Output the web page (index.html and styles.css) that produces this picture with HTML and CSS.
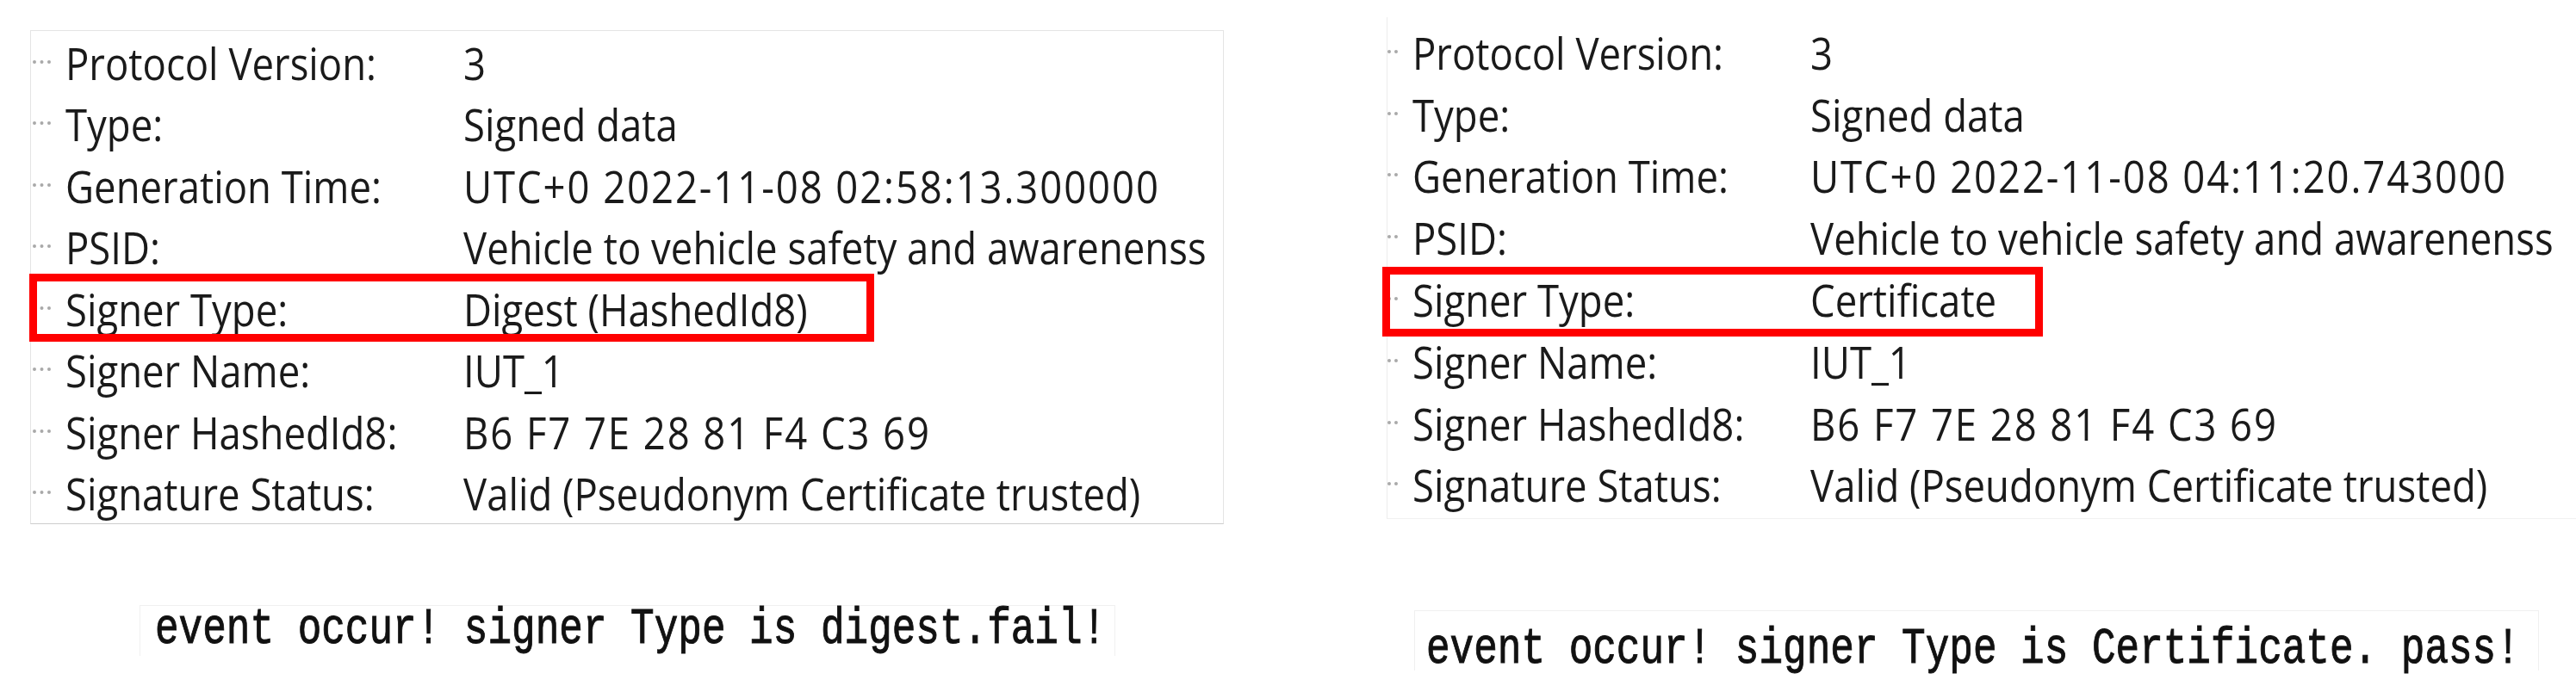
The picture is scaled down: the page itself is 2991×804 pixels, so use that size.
FILE: index.html
```html
<!DOCTYPE html>
<html lang="en">
<head>
  <meta charset="UTF-8">
  <title>Signer Type check</title>
  <link rel="stylesheet" href="styles.css">
</head>
<body>
  <div class="sheet">
    <!-- digest signer: fail -->
    <section class="capture">
      <div class="tree">
        <div class="row"><span class="dots"></span><span class="label">Protocol Version:</span><span class="value">3</span></div>
        <div class="row"><span class="dots"></span><span class="label">Type:</span><span class="value">Signed data</span></div>
        <div class="row"><span class="dots"></span><span class="label">Generation Time:</span><span class="value num">UTC+0 2022-11-08 02:58:13.300000</span></div>
        <div class="row"><span class="dots"></span><span class="label">PSID:</span><span class="value">Vehicle to vehicle safety and awarenenss</span></div>
        <div class="row marked"><span class="dots"></span><span class="label">Signer Type:</span><span class="value">Digest (HashedId8)</span></div>
        <div class="row"><span class="dots"></span><span class="label">Signer Name:</span><span class="value">IUT_1</span></div>
        <div class="row"><span class="dots"></span><span class="label">Signer HashedId8:</span><span class="value num">B6 F7 7E 28 81 F4 C3 69</span></div>
        <div class="row"><span class="dots"></span><span class="label">Signature Status:</span><span class="value">Valid (Pseudonym Certificate trusted)</span></div>
      </div>
      <div class="console"><span class="console-text">event occur! signer Type is digest.fail!</span></div>
    </section>

    <!-- certificate signer: pass -->
    <section class="capture capture-right">
      <div class="tree">
        <div class="row"><span class="dots"></span><span class="label">Protocol Version:</span><span class="value">3</span></div>
        <div class="row"><span class="dots"></span><span class="label">Type:</span><span class="value">Signed data</span></div>
        <div class="row"><span class="dots"></span><span class="label">Generation Time:</span><span class="value num">UTC+0 2022-11-08 04:11:20.743000</span></div>
        <div class="row"><span class="dots"></span><span class="label">PSID:</span><span class="value">Vehicle to vehicle safety and awarenenss</span></div>
        <div class="row marked"><span class="dots"></span><span class="label">Signer Type:</span><span class="value">Certificate</span></div>
        <div class="row"><span class="dots"></span><span class="label">Signer Name:</span><span class="value">IUT_1</span></div>
        <div class="row"><span class="dots"></span><span class="label">Signer HashedId8:</span><span class="value num">B6 F7 7E 28 81 F4 C3 69</span></div>
        <div class="row"><span class="dots"></span><span class="label">Signature Status:</span><span class="value">Valid (Pseudonym Certificate trusted)</span></div>
      </div>
      <div class="console"><span class="console-text">event occur! signer Type is Certificate. pass!</span></div>
    </section>
  </div>
</body>
</html>
```

FILE: styles.css
```css
/* Basic styling */
body {
  margin: 0;
  background-color: #ffffff;
  font-family: 'Open Sans', 'Noto Sans', sans-serif;
  color: #1a1a1a;
}

.sheet {
  display: flex;
  width: 2991px;
  height: 804px;
  overflow: hidden;
}

.capture {
  flex: none;
  width: 1386px;
  margin-left: 35px;
  padding-top: 35px;
}

.capture-right {
  flex: 1;
  width: auto;
  margin-left: 189px;
  padding-top: 20px;
}

/* tree view */
.tree {
  border: 1px solid #e4e4e4;
  border-bottom-color: #cdcdcd;
}

.capture-right .tree {
  border: none;
  border-left: 1px solid #ededed;
  border-bottom: 1px solid #f1f1f1;
  padding: 4px 0;
}

.row {
  position: relative;
  display: flex;
  align-items: center;
  height: 71.5px;
  padding-left: 2px;
  font-size: 45.5px;
  white-space: nowrap;
}

.capture-right .row {
  height: 71.8px;
  padding-left: 0;
}

.dots {
  flex: none;
  width: 21px;
  margin-right: 17px;
  border-top: 4px dotted #a9a9a9;
}

.capture-right .dots {
  width: 12px;
}

.label {
  flex: none;
  width: 462px;
  display: inline-block;
  transform: scaleY(1.14);
}

.value {
  display: inline-block;
  transform: scaleY(1.14);
}

.value.num {
  letter-spacing: 1.9px;
}

/* red highlight round the signer type row */
.marked::after {
  content: "";
  position: absolute;
  left: -2px;
  top: -4px;
  bottom: -3px;
  width: 981px;
  border: 9px solid #ff0000;
  box-sizing: border-box;
}

.capture-right .marked::after {
  left: -6px;
  top: -1px;
  bottom: -8px;
  width: 767px;
}

/* console output */
.console {
  width: 1133px;
  height: 59px;
  margin: 94px 0 0 127px;
  padding-left: 17px;
  box-sizing: border-box;
  border: 1px solid #f0f0f0;
  border-bottom: none;
  font-family: 'Liberation Mono', 'Courier New', monospace;
  font-size: 46px;
  line-height: 54px;
  color: #111111;
}

.capture-right .console {
  width: 1306px;
  height: 70px;
  margin: 106px 0 0 32px;
  padding: 17px 0 0 13px;
}

.console-text {
  display: inline-block;
  transform: scaleY(1.3);
  white-space: pre;
  -webkit-text-stroke: 0.8px #111111;
}
```
